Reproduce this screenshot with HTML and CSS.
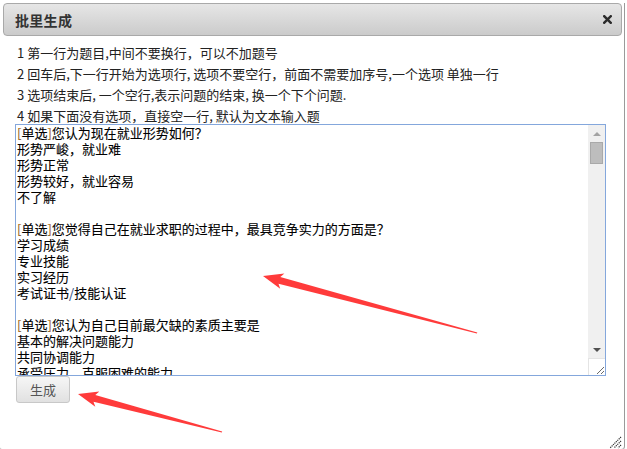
FILE: index.html
```html
<!doctype html>
<html>
	<head>
		<meta charset="utf-8">
		<title>批里生成</title>
		<link rel="stylesheet" href="styles.css">
	</head>
	<body>
		<div class="dialog">
			<div class="titlebar">
				<span class="title">批里生成</span>
				<span class="close">
					<svg width="9" height="9" viewBox="0 0 9 9"><path d="M1.2 1.2 L7.8 7.8 M7.8 1.2 L1.2 7.8" stroke="#2b2b2b" stroke-width="2.4" stroke-linecap="square"/></svg>
				</span>
			</div>

			<div class="content">
				<div class="tips">
					<div>1 第一行为题目,中间不要换行，可以不加题号</div>
					<div>2 回车后,下一行开始为选项行, 选项不要空行，前面不需要加序号,一个选项 单独一行</div>
					<div>3 选项结束后, 一个空行,表示问题的结束, 换一个下个问题.</div>
					<div>4 如果下面没有选项，直接空一行, 默认为文本输入题</div>
				</div>

				<div class="editor">
					<div class="editor-text"><span class="br">[</span>单选<span class="br">]</span>您认为现在就业形势如何？
形势严峻，就业难
形势正常
形势较好，就业容易
不了解

<span class="br">[</span>单选<span class="br">]</span>您觉得自己在就业求职的过程中，最具竞争实力的方面是？
学习成绩
专业技能
实习经历
考试证书<span class="sl">/</span>技能认证

<span class="br">[</span>单选<span class="br">]</span>您认为自己目前最欠缺的素质主要是
基本的解决问题能力
共同协调能力
承受压力、克服困难的能力
团队合作能力</div>
					<div class="scrollbar">
						<div class="sb-btn"><span class="tri-up"></span></div>
						<div class="sb-track"><div class="sb-thumb"></div></div>
						<div class="sb-btn"><span class="tri-down"></span></div>
						<div class="sb-corner">
							<svg width="17" height="17" viewBox="0 0 17 17"><path d="M15 8 L8 15 M15 12 L12 15" stroke="#6a6a6a" stroke-width="1"/></svg>
						</div>
					</div>
				</div>

				<button class="btn">生成</button>
			</div>

			<span class="grip">
				<svg width="14" height="14" viewBox="0 0 14 14"><path d="M13 2 L2 13 M13 6 L6 13 M13 10 L10 13" stroke="#333" stroke-width="1.2" stroke-dasharray="1.2 0.8"/></svg>
			</span>
		</div>

		<!-- red pointers drawn over the screenshot -->
		<svg class="marks" width="627" height="449" viewBox="0 0 627 449">
			<polygon fill="#ff3b3b" points="263,276 284.4,273.4 280.3,277.0 477.3,332.4 476.9,333.6 278.5,283.8 280.2,288.8"/>
			<polygon fill="#ff3b3b" points="78,394 99.3,391.4 95.3,394.9 222.2,431.4 221.8,432.6 93.5,401.7 95.3,406.8"/>
		</svg>
	</body>
</html>
```

FILE: styles.css
```css
html, body {
	padding: 0;
	margin: 0;
	background: #fff;
}
body {
	width: 627px;
	height: 449px;
	overflow: hidden;
	position: relative;
	font-family: "Noto Sans CJK SC", "DejaVu Sans", sans-serif;
	font-size: 13px;
	color: #222;
}

.dialog {
	position: relative;
	width: 625px;
	height: 447px;
	box-sizing: border-box;
	border-right: 1px solid #9a9a9a;
	border-bottom: 1px solid #a8a8a8;
	border-bottom-right-radius: 4px;
	border-bottom-left-radius: 3px;
	background: #fff;
}

.titlebar {
	margin: 3px 2px 0 3px;
	height: 33px;
	box-sizing: border-box;
	border: 1px solid #a9a9a9;
	border-radius: 4px;
	background: linear-gradient(#e6e6e6, #cbcbcb);
	display: flex;
	align-items: center;
	justify-content: space-between;
	padding: 0 9px 0 11px;
}
.title {
	font-size: 14px;
	font-weight: bold;
	color: #333;
	letter-spacing: 0.3px;
}
.close {
	display: flex;
	align-items: center;
}

.content {
	padding: 6px 0 0 15px;
}

.tips {
	padding-left: 2px;
	line-height: 21px;
	margin-bottom: -2px;
	color: #222;
	white-space: nowrap;
}

.editor {
	width: 591px;
	height: 252px;
	box-sizing: border-box;
	border: 1px solid #84a7dc;
	display: flex;
	background: #fff;
}
.editor-text {
	flex: 1;
	overflow: hidden;
	white-space: pre;
	line-height: 16px;
	padding-left: 1px;
	color: #000;
	-webkit-text-stroke: 0.1px #000;
}
.br {
	color: #b5741f;
}
.sl {
	color: #3b5fa0;
}

.scrollbar {
	width: 17px;
	display: flex;
	flex-direction: column;
	background: #f0f0f0;
}
.sb-btn {
	height: 17px;
	display: flex;
	align-items: center;
	justify-content: center;
}
.tri-up {
	width: 0;
	height: 0;
	border-left: 4px solid transparent;
	border-right: 4px solid transparent;
	border-bottom: 4px solid #a3a3a3;
}
.tri-down {
	width: 0;
	height: 0;
	border-left: 4px solid transparent;
	border-right: 4px solid transparent;
	border-top: 4px solid #505050;
}
.sb-track {
	flex: 1;
	padding: 0 2px;
}
.sb-thumb {
	height: 22px;
	box-sizing: border-box;
	background: #bdbdbd;
	border: 1px solid #a9a9a9;
}
.sb-corner {
	height: 17px;
	background: #fff;
	box-sizing: border-box;
	border-top: 1px solid #e4e4e4;
	border-left: 1px solid #e4e4e4;
}

.btn {
	display: block;
	margin: 0 0 0 1px;
	width: 54px;
	height: 27px;
	border: 1px solid #c8c8c8;
	border-radius: 3px;
	background: linear-gradient(#f6f6f6, #e1e1e1);
	font-family: "Noto Sans CJK SC", sans-serif;
	font-size: 13px;
	color: #555;
	padding: 0;
}

.grip {
	position: absolute;
	right: 2px;
	bottom: 1px;
	width: 14px;
	height: 14px;
}

.marks {
	position: absolute;
	top: 0;
	left: 0;
	pointer-events: none;
}
```
